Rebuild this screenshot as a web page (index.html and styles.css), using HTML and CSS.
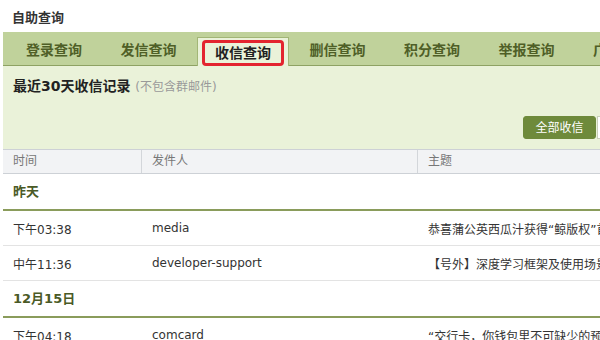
FILE: index.html
```html
<!doctype html>
<html>
  <head>
    <title>自助查询</title>
    <meta charset="UTF-8">
    <link rel="stylesheet" href="styles.css">
  </head>
  <body>
    <div class="page-title">自助查询</div>

    <div class="wrap">
      <div class="tabs">
        <a class="tab">登录查询</a>
        <a class="tab">发信查询</a>
        <a class="tab active"><span class="mark">收信查询</span></a>
        <a class="tab">删信查询</a>
        <a class="tab">积分查询</a>
        <a class="tab">举报查询</a>
        <a class="tab">广告查询</a>
      </div>

      <div class="panel">
        <h2 class="panel-title">最近30天收信记录 <span class="hint">(不包含群邮件)</span></h2>
        <div class="filters">
          <a class="btn on">全部收信</a>
          <a class="btn">未读邮件</a>
        </div>
      </div>

      <div class="table">
        <div class="row head">
          <div class="cell">时间</div>
          <div class="cell">发件人</div>
          <div class="cell">主题</div>
        </div>

        <div class="group">昨天</div>
        <div class="row">
          <div class="cell">下午03:38</div>
          <div class="cell">media</div>
          <div class="cell">恭喜蒲公英西瓜汁获得“鲸版权”首发认证</div>
        </div>
        <div class="row">
          <div class="cell">中午11:36</div>
          <div class="cell">developer-support</div>
          <div class="cell">【号外】深度学习框架及使用场景大揭秘</div>
        </div>

        <div class="group">12月15日</div>
        <div class="row">
          <div class="cell">下午04:18</div>
          <div class="cell">comcard</div>
          <div class="cell">“交行卡，你钱包里不可缺少的预约神器”</div>
        </div>
      </div>
    </div>
  </body>
</html>
```

FILE: styles.css
```css
* {
  box-sizing: border-box;
}

html, body {
  overflow: hidden;
}

/* Style the body */
body {
  margin: 0;
  font-family: "DejaVu Sans", "Noto Sans CJK SC", sans-serif;
  font-size: 12px;
  color: #333;
  background: #fff;
}

/* Page heading */
.page-title {
  padding: 4px 12px 0;
  height: 32px;
  line-height: 28px;
  font-size: 13px;
  font-weight: bold;
  color: #333;
}

.wrap {
  margin-left: 3px;
  width: 760px;
}

/* Tab bar */
.tabs {
  display: flex;
  align-items: flex-end;
  height: 34px;
  padding-left: 5px;
  background: #c0d29b;
  border-bottom: 1px solid #8ea263;
}

.tab {
  flex: none;
  width: 92px;
  margin-right: 2.5px;
  height: 29px;
  line-height: 28px;
  text-align: center;
  font-size: 14px;
  font-weight: bold;
  color: #4f5f27;
  text-decoration: none;
}

/* Selected tab sits on the panel */
.tab.active {
  position: relative;
  margin-bottom: -1px;
  height: 29px;
  background: #eaf2d9;
  border: 1px solid #a2b676;
  border-bottom: none;
  color: #222;
  padding-top: 1px;
}

/* Red highlight round the selected tab */
.mark {
  display: inline-block;
  height: 26px;
  line-height: 20px;
  padding: 0 10px;
  border: 3px solid #e3242f;
  border-radius: 4px;
}

/* Light green panel */
.panel {
  height: 83px;
  padding: 10px 10px 0;
  background: #eaf2d9;
}

.panel-title {
  margin: 0;
  line-height: 20px;
  font-size: 14px;
  font-weight: bold;
  color: #222;
}

.hint {
  font-size: 12px;
  font-weight: normal;
  color: #999;
}

.filters {
  display: flex;
  margin: 19px 0 0 510px;
}

.btn {
  height: 23px;
  line-height: 23px;
  padding: 0 13px;
  font-size: 12px;
  color: #555;
  background: #fff;
  border: 1px solid #c8cfba;
  text-decoration: none;
}

.btn.on {
  width: 73px;
  padding: 0;
  text-align: center;
  color: #fff;
  background: #6e8a3b;
  border-color: #6e8a3b;
  border-radius: 3px;
  margin-right: 1px;
}

/* Mail list */
.row {
  display: grid;
  grid-template-columns: 138px 276px 1fr;
  height: 35px;
  align-items: center;
  border-bottom: 1px solid #e3e3e3;
}

.cell {
  padding-left: 10px;
  border-left: 1px solid transparent;
  white-space: nowrap;
  overflow: hidden;
}

.cell:first-child {
  border-left: none;
}

.row.head {
  height: 25px;
  background: #f2f3f5;
  border-top: 1px solid #cdd1d6;
  border-bottom: 1px solid #cdd1d6;
  color: #777;
}

.row.head .cell {
  height: 100%;
  line-height: 23px;
  border-left-color: #d3d6da;
}

.row.head .cell:first-child {
  border-left: none;
}

.group {
  height: 37px;
  line-height: 35px;
  padding-left: 10px;
  font-size: 13px;
  font-weight: bold;
  color: #4a5a26;
  border-bottom: 2px solid #8a9c5b;
}
```
